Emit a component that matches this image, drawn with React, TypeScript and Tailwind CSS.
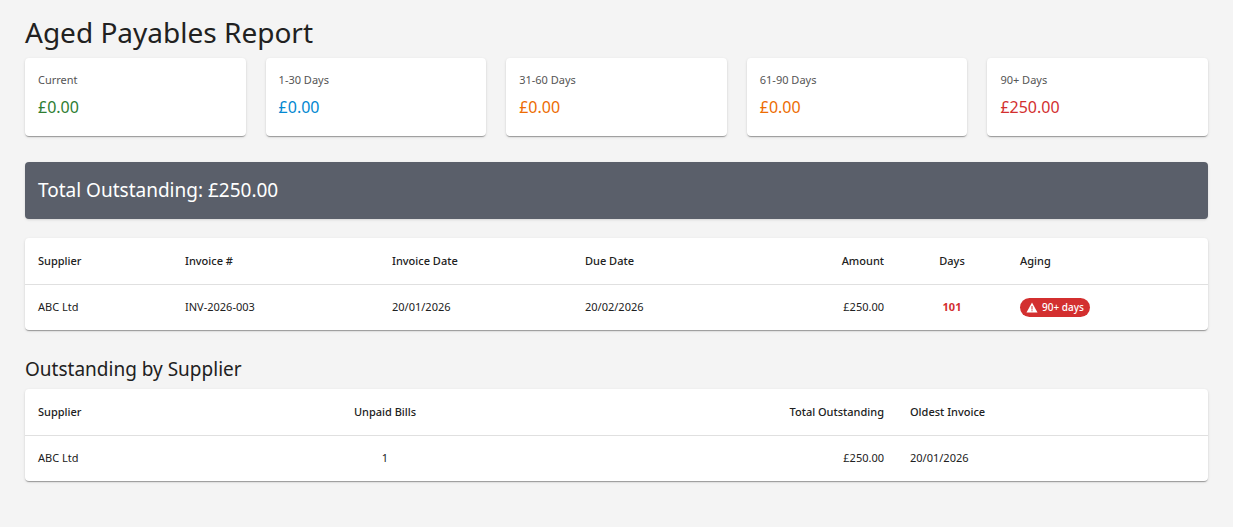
export default function App() {
  const card = "bg-white rounded shadow-[0_2px_1px_-1px_rgba(0,0,0,0.2),0_1px_1px_0_rgba(0,0,0,0.14),0_1px_3px_0_rgba(0,0,0,0.12)]";
  const buckets = [
    ["Current", "£0.00", "text-[#2e7d32]"],
    ["1-30 Days", "£0.00", "text-[#0288d1]"],
    ["31-60 Days", "£0.00", "text-[#ed6c02]"],
    ["61-90 Days", "£0.00", "text-[#ed6c02]"],
    ["90+ Days", "£250.00", "text-[#d32f2f]"],
  ];
  const th = "h-[46px] px-[13px] text-[11px] font-medium text-[#212121] border-b border-[#e0e0e0]";
  const td = "h-[46px] px-[13px] text-[11px] text-[#212121]";
  return (
    <div className="min-h-[527px] bg-[#f4f4f4] px-[25px] pt-[15px] pb-[20px] font-['Liberation_Sans',Arial,sans-serif] text-[#212121]">
      <h1 className="text-[28px] leading-[34px] mb-[9px]">Aged Payables Report</h1>
      <div className="flex gap-[20px]">
        {buckets.map(([l, v, c]) => (
          <div key={l} className={`${card} flex-1 h-[78px] px-[13px] pt-[14px]`}>
            <div className="text-[11px] text-[#555]">{l}</div>
            <div className={`text-[16px] mt-[6px] ${c}`}>{v}</div>
          </div>
        ))}
      </div>
      <div className="mt-[26px] h-[57px] rounded bg-[#5a5f6a] text-white text-[19px] flex items-center px-[13px] shadow">
        Total Outstanding: £250.00
      </div>
      <div className={`${card} mt-[19px] overflow-hidden`}>
        <table className="w-full border-collapse table-fixed">
          <colgroup>
            <col className="w-[147px]" /><col className="w-[207px]" /><col className="w-[193px]" />
            <col className="w-[193px]" /><col className="w-[132px]" /><col className="w-[110px]" /><col />
          </colgroup>
          <thead>
            <tr>
              <th className={`${th} text-left`}>Supplier</th>
              <th className={`${th} text-left`}>Invoice #</th>
              <th className={`${th} text-left`}>Invoice Date</th>
              <th className={`${th} text-left`}>Due Date</th>
              <th className={`${th} text-right`}>Amount</th>
              <th className={`${th} text-center`}>Days</th>
              <th className={`${th} text-left`}>Aging</th>
            </tr>
          </thead>
          <tbody>
            <tr>
              <td className={td}>ABC Ltd</td>
              <td className={td}>INV-2026-003</td>
              <td className={td}>20/01/2026</td>
              <td className={td}>20/02/2026</td>
              <td className={`${td} text-right`}>£250.00</td>
              <td className={`${td} text-center font-bold text-[#d32f2f]`}>101</td>
              <td className={td}>
                <span className="inline-flex items-center gap-[4px] h-[19px] px-[6px] rounded-full bg-[#d32f2f] text-white text-[10px] font-medium">
                  <svg width="12" height="11" viewBox="0 0 24 22"><path d="M12 1 L23 21 H1 Z" fill="white" /><rect x="11" y="8" width="2" height="7" fill="#d32f2f" /><rect x="11" y="16.5" width="2" height="2" fill="#d32f2f" /></svg>
                  90+ days
                </span>
              </td>
            </tr>
          </tbody>
        </table>
      </div>
      <h2 className="text-[19px] mt-[27px] mb-[8px] leading-[24px]">Outstanding by Supplier</h2>
      <div className={`${card} overflow-hidden`}>
        <table className="w-full border-collapse table-fixed">
          <colgroup>
            <col className="w-[275px]" /><col className="w-[170px]" /><col className="w-[427px]" /><col />
          </colgroup>
          <thead>
            <tr>
              <th className={`${th} text-left`}>Supplier</th>
              <th className={`${th} text-center`}>Unpaid Bills</th>
              <th className={`${th} text-right`}>Total Outstanding</th>
              <th className={`${th} text-left`}>Oldest Invoice</th>
            </tr>
          </thead>
          <tbody>
            <tr>
              <td className={`${td} h-[42px]`}>ABC Ltd</td>
              <td className={`${td} text-center`}>1</td>
              <td className={`${td} text-right`}>£250.00</td>
              <td className={td}>20/01/2026</td>
            </tr>
          </tbody>
        </table>
      </div>
    </div>
  );
}
